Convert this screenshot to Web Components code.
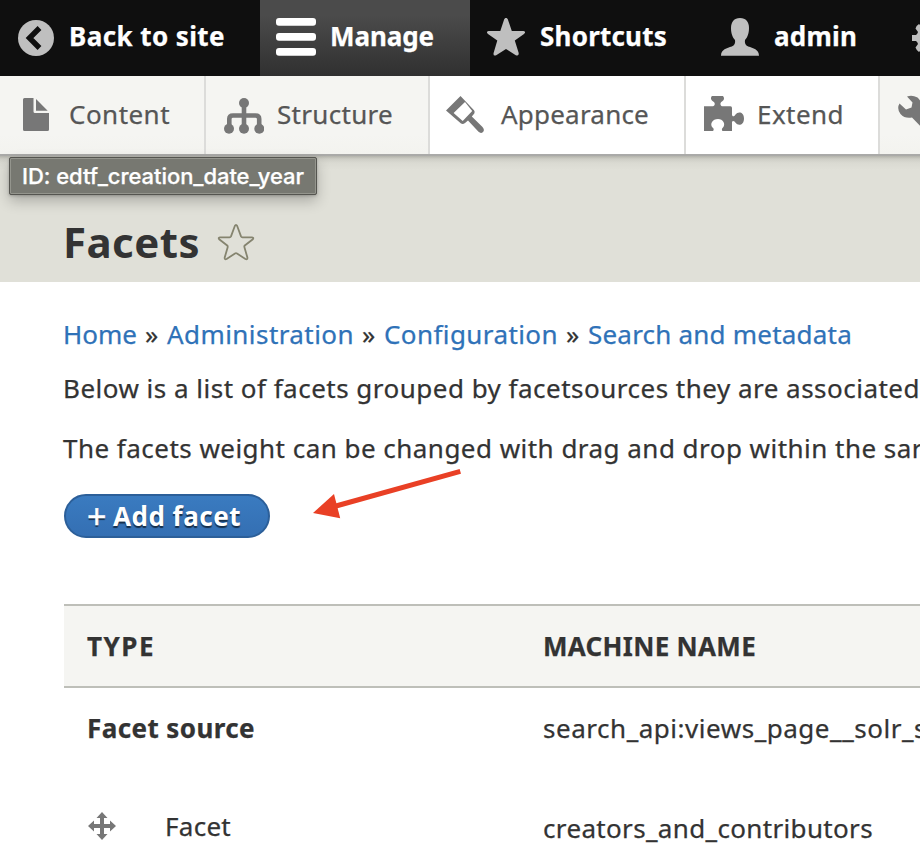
<!DOCTYPE html>
<html lang="en"><head><meta charset="utf-8"><title>Facets</title>
<style>html,body{margin:0;width:920px;height:854px;overflow:hidden;background:#fff}body{font-family:"Noto Sans","Open Sans",sans-serif;font-size:26px;color:#333}</style>
</head><body>
<facets-page></facets-page>
<script>
const define = (name, html, connected) => customElements.define(name, class extends HTMLElement {
  constructor(){ super(); this.attachShadow({mode:'open'}).innerHTML = html; }
  connectedCallback(){ if (connected) connected.call(this, this.shadowRoot); }
});

/* A run of text tracked so that it fills the width given by its "w" attribute. */
define('fit-text', `<style>:host{display:block;white-space:pre;line-height:40px;flex:none;overflow:visible;-webkit-text-stroke:.25px currentColor}span{display:inline-block;white-space:pre}</style><span><slot></slot></span>`, function(root){
  const w = +this.getAttribute('w'), span = root.querySelector('span');
  const length = root.querySelector('slot').assignedNodes({flatten:true}).map(n => n.textContent).join('').length;
  const natural = span.getBoundingClientRect().width;
  span.style.letterSpacing = ((w - natural) / length) + 'px';
  this.style.width = w + 'px';
});

/* Each icon: [viewBox, markup]. */
const icons = {
  back:['16 18 40 40','<circle cx="36" cy="38" r="18"/><path d="M39.5 28 29.5 38l10 10" fill="none" stroke="#0f0f0f" stroke-width="5.4"/>'],
  menu:['276 18 40 40','<rect x="276" y="18" width="40" height="7.7" rx="3"/><rect x="276" y="33" width="40" height="7.7" rx="3"/><rect x="276" y="48" width="40" height="7.7" rx="3"/>'],
  star:['486 18 40 40','<path d="M504.200 19.200Q506 16.500 507.800 19.200L511.800 31H523.500Q526.500 31.500 524 34L514.800 40.600 518.700 53Q519 56.500 515.800 55.200L506 48.900 496.200 55.200Q493 56.500 493.600 53L497.300 40.600 488 34Q485.600 31.500 488.500 31H500.300Z"/>'],
  user:['720 18 40 40','<path d="M740 18C734 18 731 22 731 28C731 34 732.800 37.500 735 40C735.600 43 734.500 45.300 731.800 46.500C727 48.200 721 49.300 721 55.700H759C759 49.300 753 48.200 748.200 46.500C745.500 45.300 744.400 43 745 40C747.200 37.500 749 34 749 28C749 22 746 18 740 18Z"/>'],
  gear:['910 18 40 40','<path d="M912 35H916Q917.500 34 918 32L915.500 28.500Q916 25.500 919 24L922 27 927 25V20H935V25L942 29V47L935 51V56H927V51L922 49 919 52Q916.500 50.500 915.500 47.500L918 44Q917.500 42 916 41H912Z"/>'],
  file:['16 95 40 40','<path d="M24.500 98H33.500V111.500Q33.500 113 35 113H49V129.500Q49 131 47.500 131H24.500Q23 131 23 129.500V99.500Q23 98 24.500 98Z"/><path d="M36 99 47.700 110.800H36Z"/>'],
  tree:['224 95 40 40','<circle cx="244" cy="103" r="5"/><circle cx="229" cy="128.700" r="5"/><circle cx="244" cy="128.700" r="5"/><circle cx="259.300" cy="128.700" r="5"/><path d="M244 103V128M229.300 128V119Q229.300 115.500 233 115.500H255.500Q259.200 115.500 259.200 119V128" fill="none" stroke="#777" stroke-width="4.600"/>'],
  brush:['446 95 40 40','<path fill-rule="evenodd" d="M460.500 96 446 110.500 461 123.500Q463 124.500 465 123L468 120.500 478.500 131.800Q481 134 483 132Q485 130 482.500 127L471.800 116.500 474.300 113.500Q475.200 111.500 474 110.300ZM465 102 472.200 111 462.700 121 453.600 113Z"/>'],
  puzzle:['704 95 40 40','<path d="M712 96H723Q725.500 99 722 101.500C719.500 102.500 720.500 106 722 106.200H730.500Q732 106.200 732 108V114.500C732 117 734.500 116.800 735.500 114.500C738 111 744 111.700 744 118.500C744 125.500 738 126.200 735.500 122.800C734.500 120.500 732 120 732 122.800V131H722.500C721.500 130 721.800 128.500 723 127.500C726 124 723 119 718 119C712.500 119 709.500 124 712.500 127.500C714 128.500 714 130 713 131H704V106.200H713C715 106 715.500 103 713.500 101.800C710.500 100 710.500 97.500 712 96Z"/>'],
  wrench:['898 95 40 40','<path d="M907 96.500 912.500 102.500 911.500 107.500 906 109.500 899.500 103.500Q896.500 108.500 900.500 114Q905 119 912 117.500L928 134 938 125 920.500 108Q922.500 102 917.500 97.500Q912 94.500 907 96.500Z"/>'],
  move:['87 811 30 30','<path d="M102 812 107.500 818H104V824H110V820.500L116 826 110 831.500V828H104V834H107.500L102 840 96.500 834H100V828H94V831.500L88 826 94 820.500V824H100V818H96.500Z"/>'],
  favorite:['216 222 40 40','<path d="M234.800 226Q236 223.800 237.200 226L241 236.400Q241.400 237.300 242.500 237.300H252Q254.300 237.700 252.500 239.500L244.800 245.500Q244 246.300 244.500 247.500L247.400 257.500Q247.600 260 245.400 259L237 253.500Q236 252.900 235 253.500L226.600 259Q224.400 260 224.700 257.500L227.600 247.500Q228 246.300 227.200 245.500L219.500 239.500Q217.700 237.700 220 237.300H229.500Q230.600 237.300 231 236.400Z" fill="none" stroke="#85846f" stroke-width="1.800"/>']
};
define('ui-icon', `<style>:host{display:block;flex:none;width:40px;height:40px}svg{display:block;width:100%;height:100%;fill:currentColor}</style><svg></svg>`, function(root){
  const [box, shape] = icons[this.getAttribute('name')], svg = root.querySelector('svg');
  svg.setAttribute('viewBox', box); svg.innerHTML = shape;
});

function addIcon(root){
  const icon = document.createElement('ui-icon');
  icon.setAttribute('name', this.getAttribute('icon'));
  root.querySelector('.t').before(icon);
}
define('bar-tab', `<style>
:host{display:flex;align-items:center;box-sizing:border-box;flex:none;height:76px;padding-left:16px;gap:13px;color:#bfbfbf;font-weight:700}
:host([active]){background:linear-gradient(#4b4b4b 20%,#303030)}
:host([active]) ui-icon{color:#fff}
.t{color:#fff;margin-top:-4px}</style><div class="t"><slot></slot></div>`, addIcon);
define('tray-tab', `<style>
:host{display:flex;align-items:center;box-sizing:border-box;flex:none;height:78px;padding-left:16px;gap:13px;color:#777;border-right:2px solid #dcdcda;background:linear-gradient(#f5f5f2 75%,#f3f3ef)}
:host([light]){background:#fff}
.t{color:#565656;margin-top:-2px}</style><div class="t"><slot></slot></div>`, addIcon);

define('admin-toolbar', `<style>
:host{display:block;overflow:hidden}
nav{display:flex}.bar{background:#0f0f0f}.tray{border-bottom:2px solid #aaaaa8}
</style>
<nav class="bar">
<bar-tab icon="back" style="width:260px"><fit-text w="156">Back to site</fit-text></bar-tab>
<bar-tab icon="menu" active style="width:210px;gap:14px"><fit-text w="104">Manage</fit-text></bar-tab>
<bar-tab icon="star" style="width:234px;gap:14px"><fit-text w="127">Shortcuts</fit-text></bar-tab>
<bar-tab icon="user" style="width:190px;gap:14px"><fit-text w="83">admin</fit-text></bar-tab>
<bar-tab icon="gear" style="width:100px"></bar-tab>
</nav>
<nav class="tray">
<tray-tab icon="file" style="width:206px"><fit-text w="101">Content</fit-text></tray-tab>
<tray-tab icon="tree" style="width:224px;padding-left:18px"><fit-text w="116">Structure</fit-text></tray-tab>
<tray-tab icon="brush" light style="width:256px;gap:15px"><fit-text w="148">Appearance</fit-text></tray-tab>
<tray-tab icon="puzzle" light style="width:194px;padding-left:18px"><fit-text w="87">Extend</fit-text></tray-tab>
<tray-tab icon="wrench" style="width:100px;padding-left:18px"></tray-tab>
</nav>`);

define('page-header', `<style>
:host{display:flex;box-sizing:border-box;height:126px;padding:62px 0 0 63px;background:linear-gradient(#b3b3ab,#cecec6 3px,#dadad2 7px,#e0e0d8 14px)}
fit-text{font-size:42px;font-weight:700;line-height:48px;-webkit-text-stroke:0}
ui-icon{margin:4px 0 0 16px}</style><fit-text w="137"><slot></slot></fit-text><ui-icon name="favorite"></ui-icon>`);

define('bread-crumb', `<style>
:host{display:flex;height:40px}fit-text{color:#2f72b8}fit-text.s{color:#333;margin:0 7px 0 8px}</style>
<fit-text w="74">Home</fit-text><fit-text class="s" w="15">»</fit-text><fit-text w="187">Administration</fit-text><fit-text class="s" w="15">»</fit-text><fit-text w="174">Configuration</fit-text><fit-text class="s" w="15">»</fit-text><fit-text w="264">Search and metadata</fit-text>`);

define('action-button', `<style>
:host{display:flex;box-sizing:border-box;width:206px;height:44px;border:2px solid #2c5f99;border-radius:22px;padding-left:21px;gap:5px;background:linear-gradient(#3a7bc0,#346fb3);color:#fff;font-weight:700;text-shadow:0 2px 1px rgba(0,0,0,.6)}
fit-text{line-height:41px;-webkit-text-stroke:0}
.p{font-size:34px;font-weight:400;-webkit-text-stroke:.5px #fff}</style><fit-text class="p" w="21">+</fit-text><fit-text w="128"><slot></slot></fit-text>`);

define('facet-table', `<style>
:host{display:block;width:856px}
.r{display:grid;grid-template-columns:456px 1fr;padding-left:23px;align-items:start}
.h{box-sizing:border-box;height:84px;border:solid #bebfb9;border-width:2px 0;background:#f5f5f2;padding-top:20px;font-weight:700}
.src{padding-top:20px;height:80px}.b{font-weight:700}
.f{padding-top:20px}.c{display:flex;gap:48px;align-items:center;margin-top:-2px}
ui-icon{width:30px;height:30px;color:#777}</style>
<div class="r h"><fit-text w="68">TYPE</fit-text><fit-text w="213">MACHINE NAME</fit-text></div>
<div class="r src"><fit-text class="b" w="168">Facet source</fit-text><fit-text w="384">search_api:views_page__solr_s</fit-text></div>
<div class="r f"><div class="c"><ui-icon name="move"></ui-icon><fit-text w="66">Facet</fit-text></div><fit-text w="330">creators_and_contributors</fit-text></div>`);

define('tool-tip', `<style>
:host{position:absolute;left:9px;top:157px;box-sizing:border-box;width:308px;height:38px;border:1px solid #555550;box-shadow:inset 0 0 0 1px #94958d,0 6px 14px rgba(0,0,0,.24),0 1px 3px rgba(0,0,0,.2);background:#777871;color:#fff;font:500 22px Inter,sans-serif;padding-left:12px;border-radius:2px}
fit-text{line-height:37px}</style><fit-text w="282"><slot></slot></fit-text>`);
define('pointer-arrow', `<style>:host{position:absolute;left:310px;top:465px;width:155px;height:58px}svg{display:block}</style>
<svg width="155" height="58" viewBox="310 465 155 58"><path d="M460.300 471.300 336 506" stroke="#e94025" stroke-width="5" fill="none"/><path d="M313 513 334 494 340.200 518.300Z" fill="#e94025"/></svg>`);

define('facets-page', `<style>
:host{display:block;position:relative;width:920px;height:854px;overflow:hidden}
main{padding:32px 0 0 63px}
.p1{margin-top:14px}.p2{margin-top:20px}
action-button{margin:26px 0 66px 1px}
facet-table{margin-left:1px}</style>
<admin-toolbar></admin-toolbar>
<page-header>Facets</page-header>
<main>
<bread-crumb></bread-crumb>
<fit-text class="p1" w="857">Below is a list of facets grouped by facetsources they are associated</fit-text>
<fit-text class="p2" w="860">The facets weight can be changed with drag and drop within the sar</fit-text>
<action-button>Add facet</action-button>
<facet-table></facet-table>
</main>
<tool-tip>ID: edtf_creation_date_year</tool-tip>
<pointer-arrow></pointer-arrow>`);
</script></body></html>
